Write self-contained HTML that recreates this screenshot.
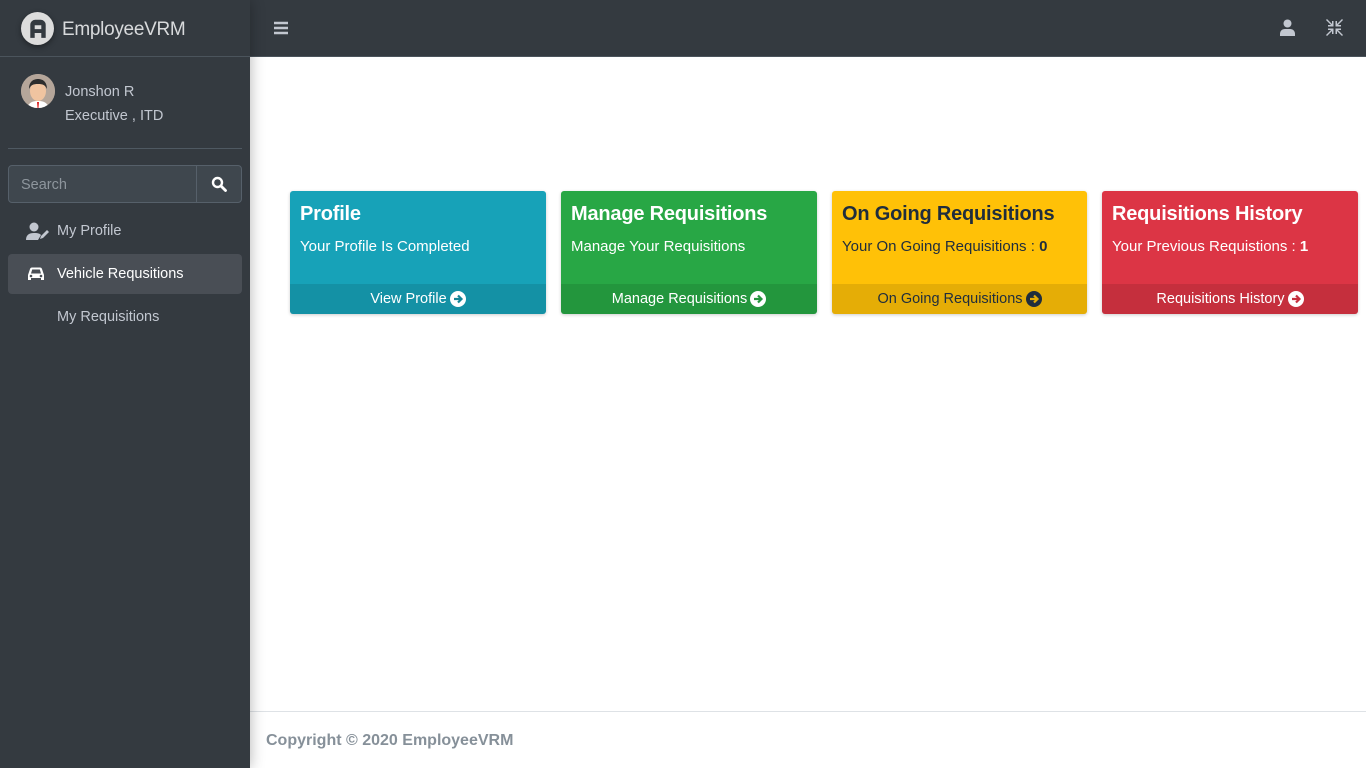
<!DOCTYPE html>
<html><head><meta charset="utf-8"><style>
*{box-sizing:border-box;margin:0;padding:0}
body{width:1366px;height:768px;overflow:hidden;font-family:"Liberation Sans",sans-serif;background:#fff;position:relative}
.side{position:absolute;left:0;top:0;width:250px;height:768px;background:#343a40;box-shadow:0 0 14px rgba(0,0,0,.3);z-index:2}
.brand{height:57px;border-bottom:1px solid #4b545c;display:flex;align-items:center;padding-left:21px}
.logo{width:33px;height:33px;border-radius:50%;background:#dcdcdc;display:flex;align-items:center;justify-content:center;box-shadow:0 2px 6px rgba(0,0,0,.4)}
.brand span{color:#d8dadc;font-size:19px;margin-left:8px;letter-spacing:-.3px;margin-top:3px}
.user{position:absolute;top:74px;left:21px;width:34px;height:34px;border-radius:50%;background:#b8aaa0;overflow:hidden}
.uname{position:absolute;left:65px;top:80px;color:#c2c7d0;font-size:14.5px;line-height:24px}
.hr{position:absolute;left:8px;right:8px;top:148px;border-top:1px solid #4f5962}
.search{position:absolute;left:8px;top:165px;width:234px;height:38px;border:1px solid #56606a;border-radius:4px;background:#3f474e;display:flex}
.search div:first-child{flex:1;color:#8e969d;font-size:14.5px;padding:11px 12px}
.search div:last-child{width:45px;border-left:1px solid #56606a;display:flex;align-items:center;justify-content:center}
.nav{position:absolute;left:8px;width:234px;height:40px;color:#c2c7d0;font-size:14.5px;display:flex;align-items:center;padding-left:49px;border-radius:4px}
.nav.act{background:#494e55;color:#fff}
.nav svg{position:absolute;left:18px}
.top{position:absolute;left:250px;top:0;right:0;height:57px;background:#343a40;border-bottom:1px solid #4b545c}
.card{position:absolute;top:191px;width:256px;height:123px;border-radius:3px;box-shadow:0 1px 3px rgba(0,0,0,.2);overflow:hidden;color:#fff}
.card h3{font-size:20px;font-weight:bold;position:absolute;left:10px;top:12px;letter-spacing:-.2px;white-space:nowrap}
.card p{font-size:15px;position:absolute;left:10px;top:47px;white-space:nowrap}
.card .f{position:absolute;left:0;right:0;bottom:0;height:30px;background:rgba(0,0,0,.1);font-size:14.5px;display:flex;align-items:center;justify-content:center;gap:3px}
.foot{position:absolute;left:250px;right:0;top:711px;height:57px;border-top:1px solid #dee2e6;color:#869099;font-weight:bold;font-size:16px;padding:20px 16px}
</style></head><body>
<div class="side">
 <div class="brand"><div class="logo"><svg width="22" height="22" viewBox="0 0 20 20"><path d="M3 19V7a4.5 4.5 0 0 1 4.5-4.5h5A4.5 4.5 0 0 1 17 7v12h-4v-4.5H7V19zM7 7.5v3.5h6V7.5z" fill="#343a40"/></svg></div><span>EmployeeVRM</span></div>
 <div class="user"><svg width="34" height="34" viewBox="0 0 34 34"><rect width="34" height="34" fill="#b5a69a"/><path d="M6 34c2-6 6-7 11-7s9 1 11 7z" fill="#fff"/><path d="M16 28h2l-.5 6h-1z" fill="#d22"/><ellipse cx="17" cy="17" rx="8" ry="10" fill="#f0c4a0"/><path d="M8 15c0-8 5-10 9-10s9 2 9 10c-2-4-4-5-9-5s-7 1-9 5z" fill="#2d2d2d"/></svg></div>
 <div class="uname">Jonshon R<br>Executive , ITD</div>
 <div class="hr"></div>
 <div class="search"><div>Search</div><div><svg width="16" height="16" viewBox="0 0 16 16"><circle cx="6.5" cy="6.5" r="4.5" stroke="#fff" stroke-width="2.4" fill="none"/><path d="M10 10l4.5 4.5" stroke="#fff" stroke-width="2.8" stroke-linecap="round"/></svg></div></div>
 <div class="nav" style="top:211px"><svg width="24" height="18" viewBox="0 0 24 18"><circle cx="8" cy="5" r="4.5" fill="#c2c7d0"/><path d="M0 18c0-5 3-7 8-7s6 1 7 2l-3 5z" fill="#c2c7d0"/><path d="M14 17l1-3 6-6 2 2-6 6z" fill="#c2c7d0"/></svg>My Profile</div>
 <div class="nav act" style="top:254px"><svg width="20" height="16" viewBox="0 0 20 16"><path d="M2 14V9l2-6c.3-1 1-1.5 2-1.5h8c1 0 1.7.5 2 1.5l2 6v5h-3v-2H5v2zM5 7.5h10l-1.2-4H6.2z" fill="#fff"/><circle cx="5" cy="10" r="1.3" fill="#494e55"/><circle cx="15" cy="10" r="1.3" fill="#494e55"/></svg>Vehicle Requsitions</div>
 <div class="nav" style="top:297px">My Requisitions</div>
</div>
<div class="top">
 <svg style="position:absolute;left:24px;top:21px" width="14" height="14" viewBox="0 0 14 14"><path d="M0 2h14M0 7h14M0 12h14" stroke="#c2c7d0" stroke-width="2.4"/></svg>
 <svg style="position:absolute;left:1030px;top:19px" width="15" height="17" viewBox="0 0 15 17"><circle cx="7.5" cy="4.5" r="4" fill="#c2c7d0"/><path d="M0 17v-2c0-3 2-5 5-5h5c3 0 5 2 5 5v2z" fill="#c2c7d0"/></svg>
 <svg style="position:absolute;left:1076px;top:19px" width="17" height="17" viewBox="0 0 17 17" fill="#c2c7d0"><path d="M1 0l5 5V2h1.5v5.5H2V6h3L0 1zM16 0l-5 5V2H9.5v5.5H15V6h-3l5-5zM1 17l5-5v3h1.5V9.5H2V11h3l-5 5zM16 17l-5-5v3H9.5V9.5H15V11h-3l5 5z"/></svg>
</div>
<div class="card" style="left:290px;background:#17a2b8"><h3>Profile</h3><p>Your Profile Is Completed</p><div class="f">View Profile <svg width="16" height="16" viewBox="0 0 16 16"><circle cx="8" cy="8" r="8" fill="#fff"/><path d="M4 8h7M8 4.5L11.5 8 8 11.5" stroke="#138496" stroke-width="2.2" fill="none"/></svg></div></div>
<div class="card" style="left:561px;background:#28a745"><h3>Manage Requisitions</h3><p>Manage Your Requisitions</p><div class="f">Manage Requisitions <svg width="16" height="16" viewBox="0 0 16 16"><circle cx="8" cy="8" r="8" fill="#fff"/><path d="M4 8h7M8 4.5L11.5 8 8 11.5" stroke="#24963e" stroke-width="2.2" fill="none"/></svg></div></div>
<div class="card" style="left:832px;width:255px;background:#ffc107;color:#1f2d3d"><h3>On Going Requisitions</h3><p>Your On Going Requisitions : <b>0</b></p><div class="f">On Going Requisitions <svg width="16" height="16" viewBox="0 0 16 16"><circle cx="8" cy="8" r="8" fill="#1f2d3d"/><path d="M4 8h7M8 4.5L11.5 8 8 11.5" stroke="#e5ad06" stroke-width="2.2" fill="none"/></svg></div></div>
<div class="card" style="left:1102px;background:#dc3545"><h3>Requisitions History</h3><p>Your Previous Requistions : <b>1</b></p><div class="f">Requisitions History <svg width="16" height="16" viewBox="0 0 16 16"><circle cx="8" cy="8" r="8" fill="#fff"/><path d="M4 8h7M8 4.5L11.5 8 8 11.5" stroke="#c62f3e" stroke-width="2.2" fill="none"/></svg></div></div>
<div class="foot">Copyright © 2020 EmployeeVRM</div>
</body></html>
